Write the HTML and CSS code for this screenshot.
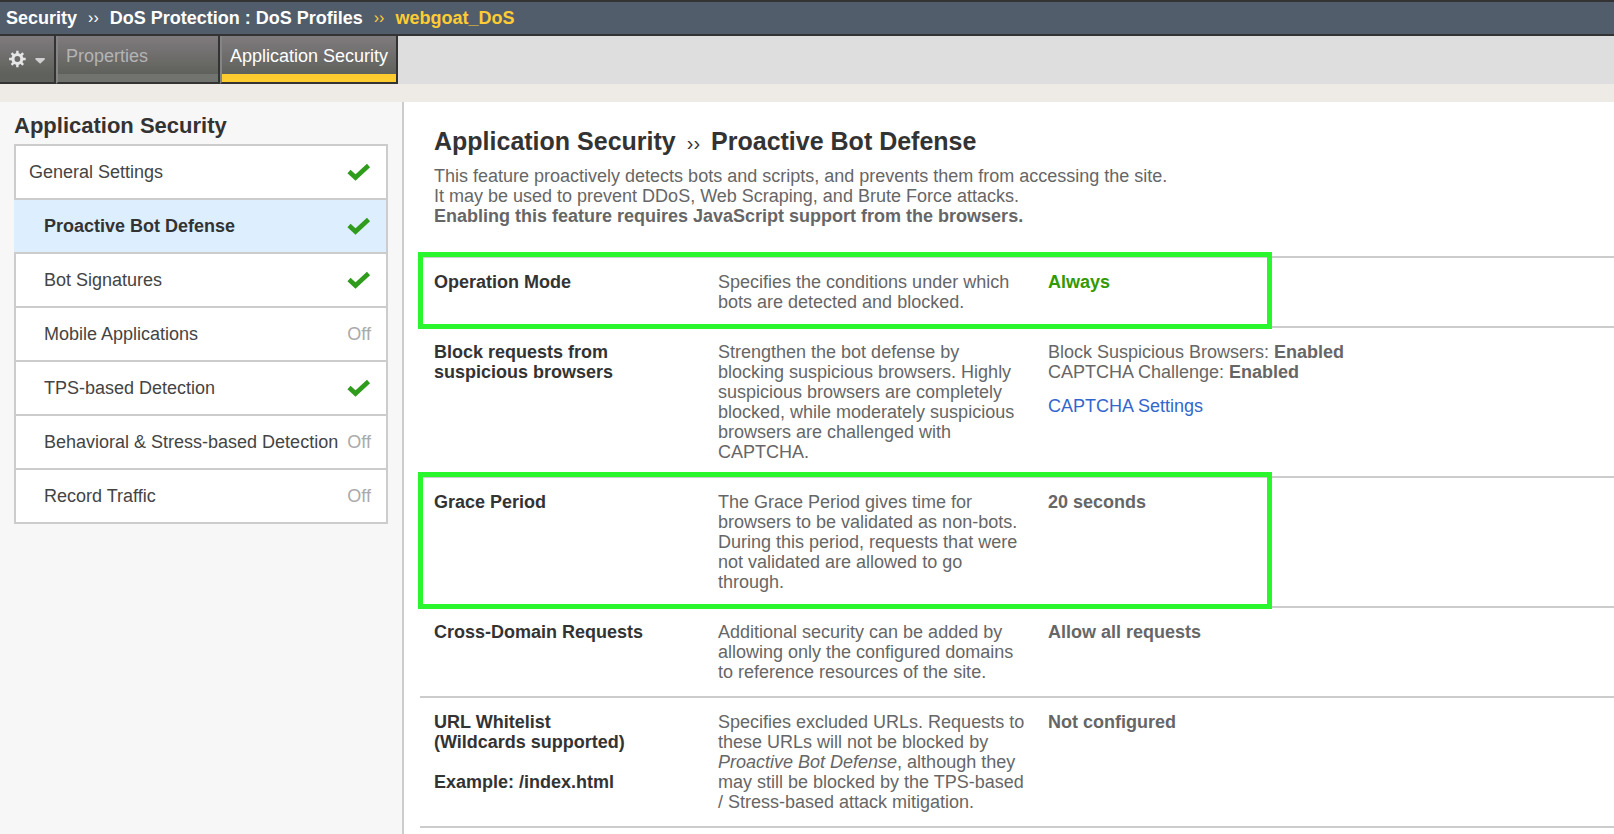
FILE: index.html
```html
<!DOCTYPE html>
<html lang="en">
<head>
<meta charset="utf-8">
<title>DoS Profiles: webgoat_DoS</title>
<link rel="stylesheet" href="styles.css">
</head>
<body>
<svg class="defs" aria-hidden="true">
  <symbol id="check" viewBox="0 0 24 18"><path d="M2 8.500 L8.500 14.500 L21.500 2.500" fill="none" stroke="#2f9c1c" stroke-width="4.600"/></symbol>
</svg>
<header class="crumbs">
  <span>Security</span><span class="sep">››</span><span>DoS Protection : DoS Profiles</span><span class="sep current">››</span><span class="current">webgoat_DoS</span>
</header>
<nav class="tabs">
  <button class="gear" aria-label="Options">
    <svg width="18" height="18" viewBox="-9 -9 18 18"><circle r="4.800" fill="none" stroke="#e6e6e6" stroke-width="3.400"/><g stroke="#e6e6e6" stroke-width="2.600"><path d="M0 -8.900V-5M0 8.900V5M-8.900 0H-5M8.900 0H5M-6.200 -6.200L-4 -4M6.200 6.200L4 4M-6.200 6.200L-4 4M6.200 -6.200L4 -4"/></g></svg>
    <svg width="11" height="18" viewBox="0 0 11 18"><path d="M0.500 8H10.500V9.500L5.500 14L0.500 9.500Z" fill="#d0d0d0"/></svg>
  </button>
  <a class="tab" href="#properties">Properties</a>
  <a class="tab selected" href="#security">Application Security</a>
</nav>
<div class="page">
  <aside class="side">
    <h2>Application Security</h2>
    <ul class="menu">
      <li class="top"><a href="#general">General Settings</a><svg class="check"><use href="#check"/></svg></li>
      <li class="active"><a href="#bot">Proactive Bot Defense</a><svg class="check"><use href="#check"/></svg></li>
      <li><a href="#signatures">Bot Signatures</a><svg class="check"><use href="#check"/></svg></li>
      <li><a href="#mobile">Mobile Applications</a><span class="off">Off</span></li>
      <li><a href="#tps">TPS-based Detection</a><svg class="check"><use href="#check"/></svg></li>
      <li><a href="#behavioral">Behavioral &amp; Stress-based Detection</a><span class="off">Off</span></li>
      <li><a href="#record">Record Traffic</a><span class="off">Off</span></li>
    </ul>
  </aside>
  <main class="main">
    <h1>Application Security<span class="chev">››</span>Proactive Bot Defense</h1>
    <p class="intro">This feature proactively detects bots and scripts, and prevents them from accessing the site.<br>It may be used to prevent DDoS, Web Scraping, and Brute Force attacks.<br><strong>Enabling this feature requires JavaScript support from the browsers.</strong></p>
    <table class="settings">
      <tbody>
        <tr><th scope="row">Operation Mode<span class="mark"></span></th><td class="desc">Specifies the conditions under which bots are detected and blocked.</td><td><strong class="always">Always</strong></td></tr>
        <tr><th scope="row">Block requests from<br>suspicious browsers</th><td class="desc">Strengthen the bot defense by blocking suspicious browsers. Highly suspicious browsers are completely blocked, while moderately suspicious browsers are challenged with CAPTCHA.</td><td>Block Suspicious Browsers: <strong>Enabled</strong><br>CAPTCHA Challenge: <strong>Enabled</strong><a class="link" href="#captcha">CAPTCHA Settings</a></td></tr>
        <tr><th scope="row">Grace Period<span class="mark"></span></th><td class="desc">The Grace Period gives time for browsers to be validated as non-bots. During this period, requests that were not validated are allowed to go through.</td><td><strong>20 seconds</strong></td></tr>
        <tr><th scope="row">Cross-Domain Requests</th><td class="desc">Additional security can be added by allowing only the configured domains to reference resources of the site.</td><td><strong>Allow all requests</strong></td></tr>
        <tr><th scope="row">URL Whitelist<br>(Wildcards supported)<br><br>Example: /index.html</th><td class="desc">Specifies excluded URLs. Requests to these URLs will not be blocked by <em>Proactive Bot Defense</em>, although they may still be blocked by the TPS-based / Stress-based attack mitigation.</td><td><strong>Not configured</strong></td></tr>
      </tbody>
    </table>
  </main>
</div>
</body>
</html>
```
FILE: styles.css
```css
* { box-sizing: border-box; }
body {
  display: flex;
  flex-direction: column;
  min-height: 100vh;
  margin: 0;
  background: #fff;
  color: #666;
  font: 18px/20px "Liberation Sans", Arial, sans-serif;
}
a { color: inherit; text-decoration: none; }
.defs { position: absolute; width: 0; height: 0; }

.crumbs {
  display: flex;
  align-items: center;
  height: 36px;
  padding: 0 6px;
  border-top: 2px solid #333;
  border-bottom: 2px solid #333;
  background: #515d6b;
  color: #fff;
  font-weight: bold;
}
.sep { padding: 0 11px; font-size: 16px; font-weight: normal; }
.current { color: #fc3; }

.tabs {
  display: flex;
  height: 48px;
  background: #dedede;
}
.gear, .tab {
  border: 0 solid #333;
  border-width: 0 2px 2px 0;
  background: linear-gradient(#807b7e, #5f615c 38px);
}
.gear {
  display: flex;
  align-items: center;
  gap: 9px;
  width: 56px;
  padding: 0 9px;
}
.tab {
  min-width: 164px;
  padding: 10px 8px 0;
  border-left: 2px solid #858585;
  color: #b4b4b4;
  box-shadow: inset 0 -8px #71736e;
}
.tab.selected { color: #fff; box-shadow: inset 0 -8px #ffcc2f; }

.page {
  display: flex;
  flex: 1;
  border-top: 18px solid #eeebe6;
}
.side {
  flex: none;
  width: 404px;
  padding: 12px 14px;
  border-right: 2px solid #ccc;
  background: #f7f7f7;
}
h1, h2 { margin: 0; color: #333; font-weight: bold; }
h2 { font-size: 22px; line-height: 24px; margin-bottom: 6px; }
.menu {
  margin: 0;
  padding: 0;
  list-style: none;
  border-top: 2px solid #ccc;
}
.menu li {
  display: flex;
  align-items: center;
  justify-content: space-between;
  height: 54px;
  padding: 0 15px 0 28px;
  border: 2px solid #ccc;
  border-top: 0;
  background: #fff;
  color: #444;
  white-space: nowrap;
}
.menu .top { padding-left: 13px; }
.menu .active {
  padding-left: 30px;
  border-left: 0;
  background: #def;
  color: #333;
  font-weight: bold;
}
.menu .off { color: #aaa; }
.check { width: 24px; height: 18px; }

.main { flex: 1; padding: 25px 0 0 16px; }
h1 { padding-left: 14px; font-size: 25px; line-height: 28px; }
.chev { padding: 0 11px; font-size: 20px; font-weight: normal; line-height: 20px; }
.intro { margin: 11px 0 30px 14px; }
.settings {
  width: 100%;
  border-spacing: 0;
  border-top: 2px solid #ccc;
}
.settings tr { position: relative; }
.settings th, .settings td {
  padding: 14px 0;
  border-bottom: 2px solid #ccc;
  text-align: left;
  vertical-align: top;
}
.settings th { width: 298px; padding-left: 14px; color: #333; }
.settings .desc { width: 330px; padding-right: 20px; }
.always { color: #390; }
.link { display: block; margin-top: 14px; color: #36c; }
.mark {
  position: absolute;
  top: -6px;
  bottom: -1px;
  left: -2px;
  width: 854px;
  border: 5px solid #2af62e;
}
```
